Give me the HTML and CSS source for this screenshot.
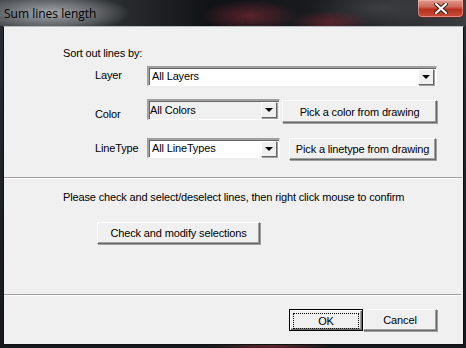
FILE: index.html
```html
<!DOCTYPE html>
<html lang="en">
<head>
  <meta charset="UTF-8">
  <title>Sum lines length</title>
  <link rel="stylesheet" href="styles.css">
</head>
<body>
  <div class="window">
    <div class="titlebar">
      <span class="title">Sum lines length</span>
      <div class="close">
        <svg width="14" height="11" viewBox="0 0 14 11">
          <path d="M2 1 L12 10 M12 1 L2 10" stroke="#3a1410" stroke-width="4" stroke-linecap="square"/>
          <path d="M2 1 L12 10 M12 1 L2 10" stroke="#fff" stroke-width="2.2" stroke-linecap="square"/>
        </svg>
      </div>
    </div>

    <div class="client">
      <div class="sort">
        <div class="heading">Sort out lines by:</div>

        <div class="row row-layer">
          <span class="label">Layer</span>
          <div class="combo wide">
            <span class="value">All Layers</span>
            <span class="arrow"></span>
          </div>
        </div>

        <div class="row row-color">
          <span class="label">Color</span>
          <div class="combo narrow disabled">
            <span class="value">All Colors</span>
            <span class="arrow"></span>
          </div>
          <button class="btn pick-color">Pick a color from drawing</button>
        </div>

        <div class="row row-type">
          <span class="label">LineType</span>
          <div class="combo narrow">
            <span class="value">All LineTypes</span>
            <span class="arrow"></span>
          </div>
          <button class="btn pick-type">Pick a linetype from drawing</button>
        </div>
      </div>

      <div class="separator"></div>

      <div class="check">
        <div class="hint">Please check and select/deselect lines, then right click mouse to confirm</div>
        <button class="btn check-btn">Check and modify selections</button>
      </div>

      <div class="separator bottom-sep"></div>

      <div class="actions">
        <button class="btn default"><span class="focus">OK</span></button>
        <button class="btn">Cancel</button>
      </div>
    </div>
  </div>
</body>
</html>
```

FILE: styles.css
```css
body {
  margin: 0;
  width: 466px;
  height: 348px;
  overflow: hidden;
  font-family: Tahoma, "Liberation Sans", "DejaVu Sans", sans-serif;
  font-size: 11px;
  letter-spacing: -0.15px;
  color: #000;
}

.window {
  width: 466px;
  height: 348px;
  display: flex;
  flex-direction: column;
  background:
    radial-gradient(ellipse 60px 14px at 270px 344px, rgba(150, 50, 60, 0.6), transparent),
    linear-gradient(#2a2d31, #16181b);
}

.titlebar {
  height: 26px;
  display: flex;
  justify-content: space-between;
  align-items: flex-start;
  background:
    radial-gradient(ellipse 80px 20px at 50px 13px, #a4a8ac, rgba(120, 124, 128, 0.7) 60%, transparent),
    radial-gradient(ellipse 50px 16px at 250px 16px, rgba(120, 40, 50, 0.7), transparent),
    radial-gradient(ellipse 40px 12px at 330px 22px, rgba(130, 40, 50, 0.6), transparent),
    radial-gradient(ellipse 70px 20px at 380px 8px, rgba(70, 70, 74, 0.7), transparent),
    linear-gradient(90deg, #3c4044 0%, #2a2d30 25%, #101216 45%, #1a1c20 70%, #3a3c40 100%);
}

.title {
  margin: 5px 0 0 4px;
  font-family: "Open Sans", "Liberation Sans", sans-serif;
  font-size: 12px;
  letter-spacing: 0;
  color: #000;
}

.close {
  width: 45px;
  height: 17px;
  margin-right: 2px;
  border: 1px solid #5a2a26;
  border-top: none;
  border-radius: 0 0 5px 5px;
  background: linear-gradient(#e0998c 0%, #d06a5a 40%, #b8301e 55%, #c8503c 100%);
  box-shadow: inset 0 0 0 1px rgba(255, 200, 190, 0.5);
  display: flex;
  justify-content: center;
  align-items: center;
}

.client {
  margin: 0 2px 3px 3px;
  flex: 1;
  background: #f0f0f0;
  border: 1px solid #0e1012;
  border-top-color: #b8bcc0;
  display: flex;
  flex-direction: column;
}

.sort {
  padding: 20px 0 0 59px;
}

.heading {
  line-height: 13px;
}

.row {
  display: flex;
  align-items: flex-start;
}

.label {
  width: 52px;
  flex-shrink: 0;
  margin-left: 32px;
  line-height: 13px;
}

.row-layer {
  margin-top: 6px;
}

.row-layer .label {
  padding-top: 3px;
}

.row-color {
  margin-top: 13px;
}

.row-color .label {
  padding-top: 9px;
}

.row-type {
  margin-top: 15px;
}

.row-type .label {
  padding-top: 4px;
}

.combo {
  box-sizing: border-box;
  height: 21px;
  display: flex;
  align-items: center;
  justify-content: space-between;
  background: #fff;
  border-top: 2px solid;
  border-left: 2px solid;
  border-right: 1px solid #fff;
  border-bottom: 1px solid #fff;
  border-color: #a0a0a0 #fff #fff #a0a0a0;
  box-shadow: inset 1px 1px 0 #696969;
  padding: 0 1px 0 3px;
}

.combo.wide {
  width: 290px;
  height: 20px;
}

.combo.narrow {
  width: 133px;
}

.row-type .combo {
  height: 20px;
}

.combo.disabled {
  background: #f0f0f0;
  padding-left: 1px;
}

.combo .value {
  line-height: 13px;
}

.arrow {
  box-sizing: border-box;
  width: 16px;
  height: 16px;
  background: #f0f0f0;
  border: 1px solid;
  border-color: #fff #696969 #696969 #fff;
  box-shadow: 1px 1px 0 #a0a0a0;
  margin-right: 1px;
  position: relative;
}

.arrow::after {
  content: "";
  position: absolute;
  left: 3px;
  top: 5px;
  border-left: 4px solid transparent;
  border-right: 4px solid transparent;
  border-top: 4px solid #000;
}

.btn {
  box-sizing: border-box;
  font-family: inherit;
  font-size: 11px;
  letter-spacing: inherit;
  color: #000;
  background: #f0f0f0;
  border: 1px solid;
  border-color: #fff #696969 #696969 #fff;
  box-shadow: 1px 1px 0 #a0a0a0, inset -1px -1px 0 #a0a0a0;
  padding: 0;
  height: 22px;
  margin: 0;
}

.pick-color {
  width: 155px;
  height: 23px;
  margin: 1px 0 0 2px;
}

.pick-type {
  width: 147px;
  height: 22px;
  margin-left: 9px;
}

.separator {
  height: 1px;
  margin: 17px 1px 0 0;
  background: #a0a0a0;
  border-bottom: 1px solid #fff;
}

.check {
  padding: 12px 0 0 59px;
}

.hint {
  line-height: 13px;
}

.check-btn {
  width: 163px;
  margin: 18px 0 0 34px;
}

.bottom-sep {
  margin-top: 50px;
  margin-right: 2px;
}

.actions {
  display: flex;
  justify-content: flex-end;
  padding: 13px 26px 0 0;
}

.actions .btn {
  width: 74px;
}

.btn.default {
  border: 1px solid #000;
  box-shadow: inset 1px 1px 0 #fff, inset -1px -1px 0 #696969, inset -2px -2px 0 #a0a0a0;
  padding: 3px;
}

.focus {
  display: block;
  height: 14px;
  line-height: 14px;
  border: 1px dotted #000;
}
```
